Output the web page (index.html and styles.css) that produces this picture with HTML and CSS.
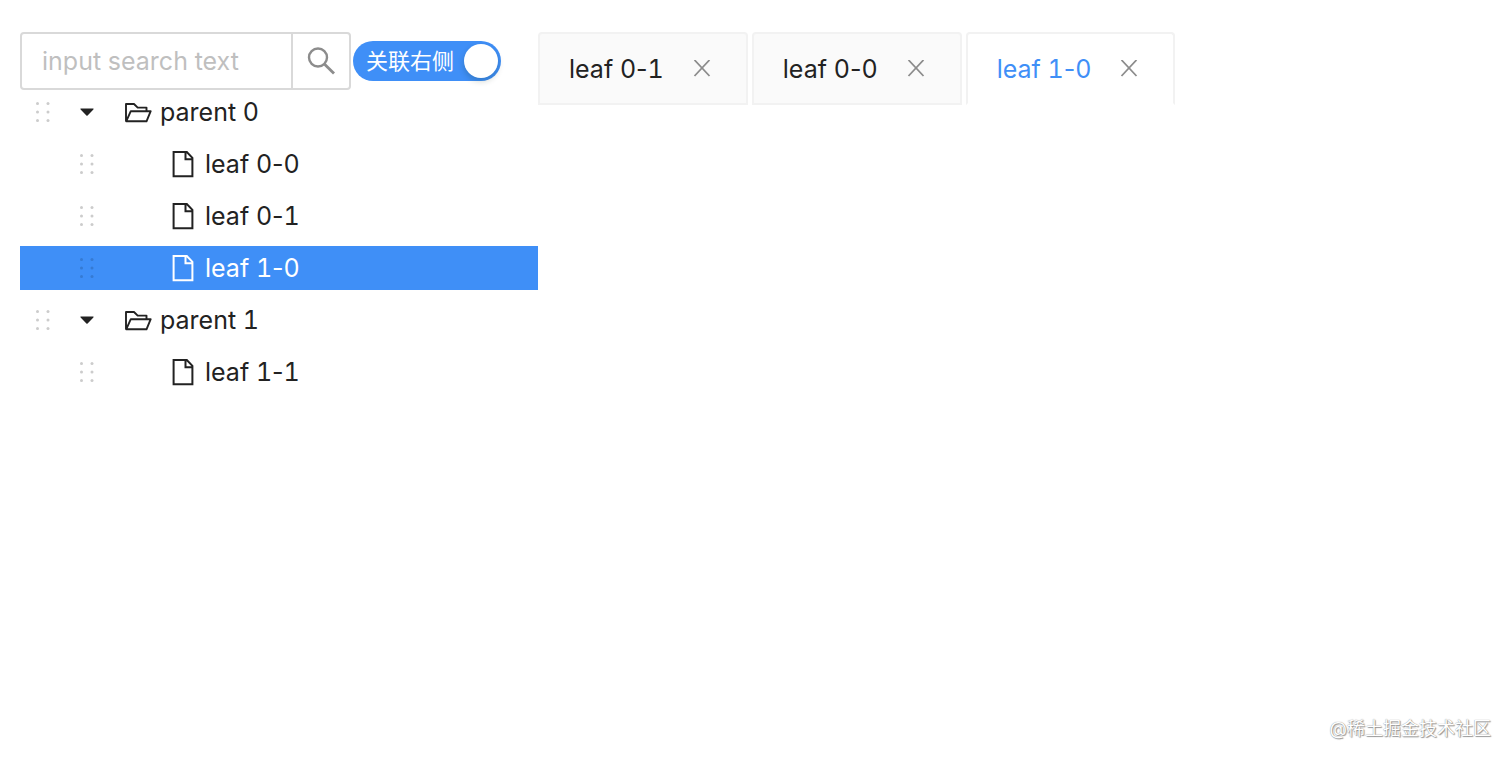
FILE: index.html
```
<!DOCTYPE html>
<html lang="zh-CN">
<head>
<meta charset="utf-8">
<meta name="viewport" content="width=device-width, initial-scale=1">
<title>Tree tabs</title>
<link rel="stylesheet" href="styles.css">
</head>
<body>
<svg class="symbols" aria-hidden="true">
  <symbol id="drag" viewBox="0 0 30 30"><g fill="currentColor"><circle cx="9.5" cy="6.5" r="1.5"/><circle cx="20" cy="6.5" r="1.5"/><circle cx="9.5" cy="15" r="1.5"/><circle cx="20" cy="15" r="1.5"/><circle cx="9.5" cy="23.5" r="1.5"/><circle cx="20" cy="23.5" r="1.5"/></g></symbol>
  <symbol id="caret" viewBox="0 0 30 30"><path d="M9 11.5h12c.6 0 .8.5.4.9l-5.8 6.2a.9.9 0 0 1-1.2 0l-5.8-6.2c-.4-.4-.2-.9.4-.9z" fill="currentColor"/></symbol>
  <symbol id="folder" viewBox="0 0 30 30"><path d="M3 24.3V7h8l3.7 3.6h8.8v3.6M3.2 24.3 7.8 14.2h19.9l-4.2 10.1z" fill="none" stroke="currentColor" stroke-width="1.9" stroke-linejoin="round"/></symbol>
  <symbol id="file" viewBox="0 0 30 30"><path d="M5.6 3.1h13.2l5.6 5.8v18.4H5.6zM17.5 3.2v7h6.8" fill="none" stroke="currentColor" stroke-width="2"/></symbol>
  <symbol id="close" viewBox="0 0 18 18"><path d="M1.5 0 16.5 16M16.5 0 1.5 16" fill="none" stroke="currentColor" stroke-width="1.8"/></symbol>
</svg>
<div class="layout">
  <aside class="sidebar">
    <div class="toolbar">
      <form class="search" role="search">
        <input class="search-input" type="text" placeholder="input search text" aria-label="Search">
        <button class="search-button" type="button" aria-label="Search"><svg viewBox="0 0 30 30"><circle cx="12" cy="11.5" r="9" fill="none" stroke="currentColor" stroke-width="2.4"/><path d="m18.6 18.2 9.4 9.4" stroke="currentColor" stroke-width="2.8"/></svg></button>
      </form>
      <button class="switch" type="button" role="switch" aria-checked="true"><span>关联右侧</span><span class="knob"></span></button>
    </div>
    <ul class="tree" role="tree">
      <li class="node" role="treeitem" aria-expanded="true"><svg class="icon drag"><use href="#drag"/></svg><svg class="icon caret"><use href="#caret"/></svg><svg class="icon"><use href="#folder"/></svg><span class="name">parent 0</span></li>
      <li class="node leaf" role="treeitem"><svg class="icon drag"><use href="#drag"/></svg><svg class="icon"><use href="#file"/></svg><span class="name">leaf 0<span class="dash">-</span>0</span></li>
      <li class="node leaf" role="treeitem"><svg class="icon drag"><use href="#drag"/></svg><svg class="icon"><use href="#file"/></svg><span class="name">leaf 0<span class="dash">-</span>1</span></li>
      <li class="node leaf selected" role="treeitem" aria-selected="true"><svg class="icon drag"><use href="#drag"/></svg><svg class="icon"><use href="#file"/></svg><span class="name">leaf 1<span class="dash">-</span>0</span></li>
      <li class="node" role="treeitem" aria-expanded="true"><svg class="icon drag"><use href="#drag"/></svg><svg class="icon caret"><use href="#caret"/></svg><svg class="icon"><use href="#folder"/></svg><span class="name">parent 1</span></li>
      <li class="node leaf" role="treeitem"><svg class="icon drag"><use href="#drag"/></svg><svg class="icon"><use href="#file"/></svg><span class="name">leaf 1<span class="dash">-</span>1</span></li>
    </ul>
  </aside>
  <main class="content">
    <div class="tabs">
      <div class="tab"><button class="tab-label" type="button">leaf 0<span class="dash">-</span>1</button><button class="tab-close" type="button" aria-label="Close"><svg><use href="#close"/></svg></button></div>
      <div class="tab"><button class="tab-label" type="button">leaf 0<span class="dash">-</span>0</button><button class="tab-close" type="button" aria-label="Close"><svg><use href="#close"/></svg></button></div>
      <div class="tab active"><button class="tab-label" type="button">leaf 1<span class="dash">-</span>0</button><button class="tab-close" type="button" aria-label="Close"><svg><use href="#close"/></svg></button></div>
    </div>
  </main>
</div>
<footer class="watermark">@稀土掘金技术社区</footer>
</body>
</html>
```
FILE: styles.css
```
* { box-sizing: border-box; }
body {
  margin: 0;
  min-height: 100vh;
  display: flex;
  flex-direction: column;
  background: #fff;
  color: #222;
  font: 25px/32px Inter, "Noto Sans CJK SC", sans-serif;
  font-variant-numeric: tabular-nums;
}
button, input { font: inherit; font-variant-numeric: inherit; color: inherit; margin: 0; padding: 0; border: 0; background: none; }
button { cursor: pointer; }
svg { display: block; flex: none; }
.symbols { position: absolute; width: 0; height: 0; }
.dash { font-variant-numeric: normal; }
.layout { display: flex; flex: 1; padding: 32px 20px 0; }
.sidebar { flex: none; width: 518px; }
.toolbar { display: flex; align-items: center; gap: 2px; }
.search { display: flex; width: 331px; height: 58px; border: 2px solid #d9d9d9; border-radius: 4px; }
.search-input { flex: 1; min-width: 0; padding-left: 20px; outline: 0; }
.search-input::placeholder { color: #bfbfbf; opacity: 1; }
.search-button { display: grid; place-items: center; width: 58px; border-left: 2px solid #d9d9d9; color: #8c8c8c; }
.search-button svg { width: 30px; height: 30px; }
.switch {
  display: flex;
  align-items: center;
  justify-content: space-between;
  width: 148px;
  height: 40px;
  padding: 0 3px 0 13px;
  border-radius: 20px;
  background: #3f8ff7;
  color: #fff;
  font-size: 22px;
}
.knob { width: 34px; height: 34px; border-radius: 50%; background: #fff; box-shadow: 0 3px 6px rgba(0, 35, 11, .2); }
.tree { display: flex; flex-direction: column; gap: 8px; margin: 0; padding: 0; list-style: none; }
.node { display: flex; align-items: center; height: 44px; padding-left: 8px; }
.leaf { padding-left: 52px; }
.icon { width: 30px; height: 30px; }
.drag { color: #ccc; }
.caret { margin: 0 21px 0 14px; }
.leaf .drag { margin-right: 66px; }
.name { margin-left: 7px; }
.selected { background: #3f8ff7; color: #fff; }
.selected .drag { color: #357ad3; }
.content { flex: 1; min-width: 0; }
.tabs { display: flex; }
.tab {
  display: flex;
  align-items: center;
  gap: 29px;
  height: 73px;
  padding: 0 35px 0 29px;
  border: 2px solid #f2f2f2;
  border-radius: 4px 4px 0 0;
  background: #fafafa;
}
.tab + .tab { margin-left: 4px; }
.tab.active { border-bottom-color: transparent; background: #fff; color: #3f8ff7; }
.tab-close { color: #8c8c8c; }
.tab-close svg { width: 18px; height: 18px; }
.watermark { padding: 0 21px 19px; color: #fff; font-size: 18px; line-height: 24px; text-align: right; text-shadow: 0 0 1px #777, 1px 1px 1px #999; }
```
